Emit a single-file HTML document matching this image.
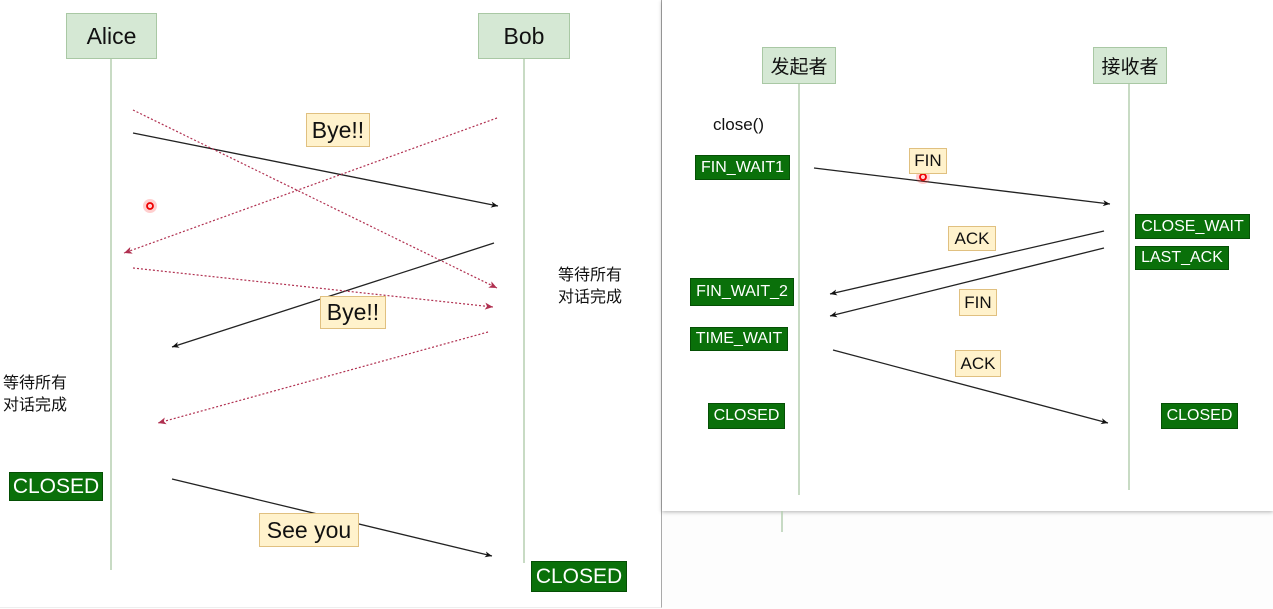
<!DOCTYPE html>
<html><head><meta charset="utf-8"><style>
body{margin:0;width:1273px;height:609px;background:#fdfdfd;position:relative;overflow:hidden;font-family:"Liberation Sans","Noto Sans CJK SC",sans-serif;}
.p{position:absolute;background:#fff}
.b{position:absolute;box-sizing:border-box;display:flex;align-items:center;justify-content:center;color:#111}
.act{background:#d5e8d4;border:1px solid #a9c8a4}
.note{background:#fff2cc;border:1px solid #e0c080}
.st{background:#0a700a;color:#fff;border:1px solid #054f05}
.t{position:absolute;color:#111;white-space:nowrap}
</style></head><body>
<div class="p" style="left:0;top:0;width:661px;height:607px;border-right:1px solid #aaa;border-bottom:1px solid #eee"></div>
<div class="p" style="left:662px;top:0;width:611px;height:511px;box-shadow:0 1px 4px rgba(0,0,0,.3)"></div>
<svg width="1273" height="609" style="position:absolute;left:0;top:0">
<defs>
<marker id="a" markerWidth="8" markerHeight="8" refX="7" refY="4" orient="auto" markerUnits="userSpaceOnUse"><path d="M0,1 L7,4 L0,7 L2,4z" fill="#111"/></marker>
<marker id="r" markerWidth="9" markerHeight="9" refX="8" refY="4.5" orient="auto" markerUnits="userSpaceOnUse"><path d="M0,1 L8,4.5 L0,8 L2,4.5z" fill="#b03050"/></marker>
</defs>
<g stroke="#b5cfb0" stroke-width="1.5">
<line x1="111" y1="58" x2="111" y2="570"/><line x1="524" y1="58" x2="524" y2="563"/>
<line x1="799" y1="83" x2="799" y2="495"/><line x1="1129" y1="83" x2="1129" y2="490"/>
<line x1="782" y1="511" x2="782" y2="532"/>
</g>
<g stroke="#222" stroke-width="1.3" marker-end="url(#a)">
<line x1="133" y1="133" x2="498" y2="206"/>
<line x1="494" y1="243" x2="172" y2="347"/>
<line x1="172" y1="479" x2="492" y2="556"/>
<line x1="814" y1="168" x2="1110" y2="204"/>
<line x1="1104" y1="231" x2="830" y2="294"/>
<line x1="1104" y1="248" x2="830" y2="316"/>
<line x1="833" y1="350" x2="1108" y2="423"/>
</g>
<g stroke="#b03050" stroke-width="1.2" stroke-dasharray="2,2" marker-end="url(#r)">
<line x1="133" y1="110" x2="497" y2="288"/>
<line x1="497" y1="118" x2="124" y2="253"/>
<line x1="133" y1="268" x2="493" y2="307"/>
<line x1="488" y1="332" x2="158" y2="423"/>
</g>
<circle cx="150" cy="206" r="7" fill="#ff4040" opacity=".25"/><circle cx="150" cy="206" r="3" fill="none" stroke="#e00" stroke-width="1.8"/>
<circle cx="923" cy="177" r="7" fill="#ff4040" opacity=".25"/><circle cx="923" cy="177" r="3" fill="none" stroke="#e00" stroke-width="1.8"/>
</svg>
<div class="b act" style="left:66px;top:13px;width:91px;height:46px;font-size:23px">Alice</div>
<div class="b act" style="left:478px;top:13px;width:92px;height:46px;font-size:23px">Bob</div>
<div class="b note" style="left:306px;top:113px;width:64px;height:34px;font-size:23px">Bye!!</div>
<div class="b note" style="left:320px;top:296px;width:66px;height:33px;font-size:23px">Bye!!</div>
<div class="b note" style="left:259px;top:513px;width:100px;height:34px;font-size:23px">See you</div>
<div class="b st" style="left:9px;top:472px;width:94px;height:29px;font-size:21px">CLOSED</div>
<div class="b st" style="left:531px;top:561px;width:96px;height:31px;font-size:21px">CLOSED</div>
<div class="t" style="left:558px;top:265px;font-size:16px;line-height:22px">等待所有<br>对话完成</div>
<div class="t" style="left:3px;top:373px;font-size:16px;line-height:22px">等待所有<br>对话完成</div>

<div class="b act" style="left:762px;top:47px;width:74px;height:37px;font-size:19px">发起者</div>
<div class="b act" style="left:1093px;top:47px;width:74px;height:37px;font-size:19px">接收者</div>
<div class="t" style="left:713px;top:115px;font-size:17px">close()</div>
<div class="b st" style="left:695px;top:155px;width:95px;height:25px;font-size:16px">FIN_WAIT1</div>
<div class="b note" style="left:909px;top:148px;width:38px;height:26px;font-size:17px">FIN</div>
<div class="b st" style="left:1135px;top:214px;width:115px;height:25px;font-size:16px">CLOSE_WAIT</div>
<div class="b st" style="left:1135px;top:246px;width:94px;height:24px;font-size:16px">LAST_ACK</div>
<div class="b note" style="left:948px;top:226px;width:48px;height:25px;font-size:17px">ACK</div>
<div class="b st" style="left:690px;top:278px;width:104px;height:28px;font-size:16px">FIN_WAIT_2</div>
<div class="b note" style="left:959px;top:289px;width:38px;height:27px;font-size:17px">FIN</div>
<div class="b st" style="left:690px;top:327px;width:98px;height:24px;font-size:16px">TIME_WAIT</div>
<div class="b note" style="left:955px;top:350px;width:46px;height:27px;font-size:17px">ACK</div>
<div class="b st" style="left:708px;top:403px;width:77px;height:26px;font-size:16px">CLOSED</div>
<div class="b st" style="left:1161px;top:403px;width:77px;height:26px;font-size:16px">CLOSED</div>
</body></html>
